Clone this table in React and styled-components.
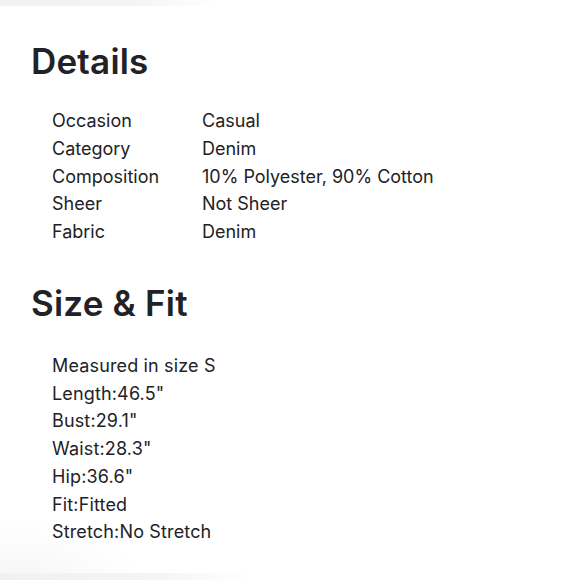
import React from 'react';
import styled, { createGlobalStyle } from 'styled-components';

const GlobalStyle = createGlobalStyle`
    html, body {
        margin: 0;
        padding: 0;
        background: #ffffff;
    }
    body {
        font-family: Inter, "Noto Sans", "DejaVu Sans", sans-serif;
        color: #222226;
    }
`;

const details = [
    { label: "Occasion", value: "Casual" },
    { label: "Category", value: "Denim" },
    { label: "Composition", value: "10% Polyester, 90% Cotton" },
    { label: "Sheer", value: "Not Sheer" },
    { label: "Fabric", value: "Denim" },
];

const measures = [
    "Measured in size S",
    "Length:46.5\"",
    "Bust:29.1\"",
    "Waist:28.3\"",
    "Hip:36.6\"",
    "Fit:Fitted",
    "Stretch:No Stretch",
];

const Page = styled.div`
    position: relative;
    width: 580px;
    height: 580px;
    overflow: hidden;
    background: radial-gradient(ellipse 120px 60px at 20px 580px, #f6f6f6, rgba(255,255,255,0));
    display: flex;
    flex-direction: column;
`;

const Strip = styled.div`
    height: ${p => p.$height}px;
    width: 100%;
    flex-shrink: 0;
    background: linear-gradient(90deg, #f1f1f1 0px, #f4f4f4 ${p => p.$fade * 0.6}px, #ffffff ${p => p.$fade}px);
`;

const Content = styled.div`
    flex: 1;
    padding: 0 0 0 31px;
`;

const Heading = styled.h2`
    margin: ${p => p.$top}px 0 0 0;
    font-size: 35px;
    line-height: 40px;
    font-weight: 600;
    color: #222226;
    letter-spacing: 0.2px;
`;

const Table = styled.div`
    margin: 26px 0 0 21px;
    display: grid;
    grid-template-columns: 150px auto;
    grid-auto-rows: 27.75px;
    font-size: 18px;
    line-height: 27.75px;
`;

const Cell = styled.div`
    white-space: nowrap;
`;

const List = styled.div`
    margin: 29px 0 0 21px;
    display: flex;
    flex-direction: column;
    font-size: 18px;
    line-height: 27.75px;
    letter-spacing: 0.15px;
`;

const Spacer = styled.div`
    flex: 1;
`;

export default function App() {
    return (
        <Page>
            <GlobalStyle />
            <Strip $height={6} $fade={220} />
            <Content>
                <Heading $top={35}>Details</Heading>
                <Table>
                    {details.map((row, index) => (
                        <React.Fragment key={index}>
                            <Cell>{row.label}</Cell>
                            <Cell>{row.value}</Cell>
                        </React.Fragment>
                    ))}
                </Table>
                <Heading $top={37}>Size &amp; Fit</Heading>
                <List>
                    {measures.map((line, index) => (
                        <Cell key={index}>{line}</Cell>
                    ))}
                </List>
            </Content>
            <Spacer />
            <Strip $height={7} $fade={250} />
        </Page>
    );
}
